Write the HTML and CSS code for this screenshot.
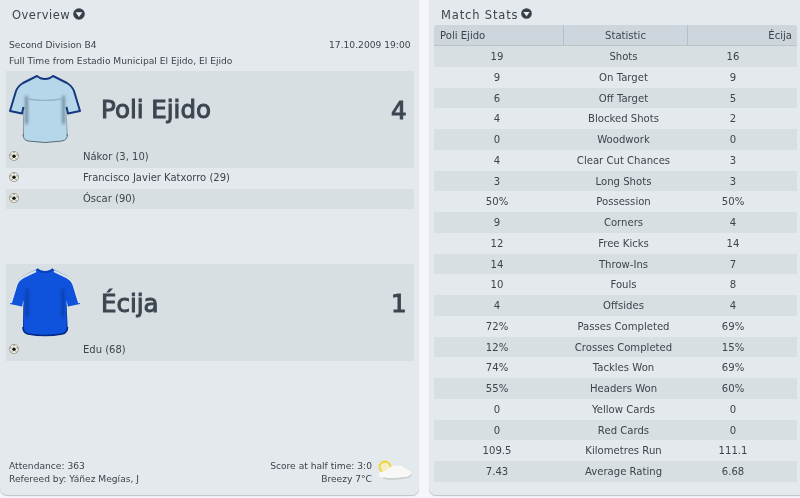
FILE: index.html
```html
<!DOCTYPE html>
<html lang="en">
<head>
<meta charset="utf-8">
<title>Match Overview</title>
<link rel="stylesheet" href="styles.css">
</head>
<body>
<svg class="defs" width="0" height="0" aria-hidden="true">
  <defs>
    <symbol id="ball" viewBox="0 0 10 10">
      <circle cx="5" cy="5" r="4.600" fill="#ecebdd" stroke="#7d7f72" stroke-width=".6"/>
      <circle cx="5" cy="5.300" r="1.700" fill="#141612"/>
      <path d="M1 4 2.600 3.800M9 4 7.400 3.800M5 .7V2M2.400 8.400 3.300 7.200M7.600 8.400 6.700 7.200" stroke="#66675f" stroke-width=".8"/>
    </symbol>
    <symbol id="chev" viewBox="0 0 12 12">
      <circle cx="6" cy="6" r="5.800" fill="#38414a"/>
      <path d="M2.600 4.300h6.800L6 8.900z" fill="#f0f3f5"/>
    </symbol>
    <clipPath id="shirt-clip">
      <path d="M28 2 31 4Q36 6 41 4L44 2 58 9Q63 12 65 17L71 37 59 39.500 57.500 33 58.500 60Q58.500 66 53 67 36 70 19 67 14 66 14 60L14.500 33 13 39.500 1 37 7 17Q9 12 14 9Z"/>
    </clipPath>
    <filter id="soft" x="-10%" y="-30%" width="120%" height="160%"><feGaussianBlur stdDeviation=".7"/></filter>
    <filter id="softer" x="-50%" y="-50%" width="200%" height="200%"><feGaussianBlur stdDeviation="1.800"/></filter>
    <filter id="tiny" x="-10%" y="-10%" width="120%" height="120%"><feGaussianBlur stdDeviation=".3"/></filter>
  </defs>
</svg>

<main class="layout">
  <section class="panel overview">
    <h2 class="title">Overview<svg class="chev"><use href="#chev"/></svg></h2>
    <div class="meta">
      <div class="meta-row"><span>Second Division B4</span><span>17.10.2009 19:00</span></div>
      <div class="meta-row"><span>Full Time from Estadio Municipal El Ejido, El Ejido</span></div>
    </div>

    <div class="team">
      <div class="team-head shaded">
        <svg class="shirt" viewBox="0 0 72 70">
          <path d="M28 2 31 4Q36 6 41 4L44 2 58 9Q63 12 65 17L71 37 59 39.500 57.500 33 58.500 60Q58.500 66 53 67 36 70 19 67 14 66 14 60L14.500 33 13 39.500 1 37 7 17Q9 12 14 9Z" fill="#b6d7ea"/>
          <g clip-path="url(#shirt-clip)">
            <path d="M17.500 22V50M54.500 22V50" stroke="#1f2f3a" stroke-width="2.600" stroke-opacity=".5" filter="url(#softer)"/>
            <path d="M14 38V62M58.500 38V62" stroke="#22313b" stroke-width="2" stroke-opacity=".4" filter="url(#soft)"/>
            <path d="M20 25Q36 28 52 25" stroke="#4d6576" stroke-width="1.500" fill="none" stroke-opacity=".3" filter="url(#soft)"/>
          </g>
          <path d="M14 60Q14 66 19 67 36 70 53 67 58.500 66 58.500 60" fill="none" stroke="#5a6b76" stroke-width="1" filter="url(#tiny)"/>
          <path d="M14.500 33 13 39.500 1 37 7 17Q9 12 14 9L28 2 31 4Q36 6 41 4L44 2 58 9Q63 12 65 17L71 37 59 39.500 57.500 33" fill="none" stroke="#15397f" stroke-width="2" stroke-linejoin="round" filter="url(#tiny)"/>
        </svg>
        <span class="team-name">Poli Ejido</span>
        <span class="score">4</span>
      </div>
      <div class="scorer shaded"><svg class="ball"><use href="#ball"/></svg><span>Nákor (3, 10)</span></div>
      <div class="scorer"><svg class="ball"><use href="#ball"/></svg><span>Francisco Javier Katxorro (29)</span></div>
      <div class="scorer shaded"><svg class="ball"><use href="#ball"/></svg><span>Óscar (90)</span></div>
    </div>

    <div class="team team-away">
      <div class="team-head shaded">
        <svg class="shirt" viewBox="0 0 72 70">
          <path d="M28 2 31 4Q36 6 41 4L44 2 58 9Q63 12 65 17L71 37 59 39.500 57.500 33 58.500 60Q58.500 66 53 67 36 70 19 67 14 66 14 60L14.500 33 13 39.500 1 37 7 17Q9 12 14 9Z" fill="#0f52dc"/>
          <g clip-path="url(#shirt-clip)">
            <path d="M18 22V50M54 22V50" stroke="#03205f" stroke-width="3" stroke-opacity=".4" filter="url(#softer)"/>
            <path d="M14 38V62M58.500 38V62" stroke="#03205f" stroke-width="2" stroke-opacity=".5" filter="url(#soft)"/>
          </g>
          <path d="M14 60Q14 66 19 67 36 70 53 67 58.500 66 58.500 60" fill="none" stroke="#052a85" stroke-width="1.600" filter="url(#tiny)"/>
          <path d="M1.800 36 7.500 17.500Q9 13 14.500 10L27 4M70.200 36 64.500 17.500Q63 13 57.500 10L45 4" fill="none" stroke="#dfe4e9" stroke-width="2.200" filter="url(#tiny)"/>
          <path d="M28 2 31 4Q36 6 41 4L44 2" fill="none" stroke="#0a3fb8" stroke-width="2"/>
        </svg>
        <span class="team-name">Écija</span>
        <span class="score">1</span>
      </div>
      <div class="scorer shaded"><svg class="ball"><use href="#ball"/></svg><span>Edu (68)</span></div>
    </div>

    <footer class="foot">
      <div class="foot-left">
        <div>Attendance: 363</div>
        <div>Refereed by: Yáñez Megías, J</div>
      </div>
      <div class="foot-right">
        <div>Score at half time: 3:0</div>
        <div>Breezy 7°C</div>
      </div>
      <svg class="weather" viewBox="0 0 36 24">
        <circle cx="9" cy="7" r="5.500" fill="#f3eec8" stroke="#f4d22e" stroke-width="1.800" filter="url(#tiny)"/>
        <path d="M7 18Q2 17 3 13.500 5 10.500 10 11 13 6 20 5.500 27 5 30 9 36 11 35.500 14.500 34 18 26 18Z" fill="#f8f9f7" filter="url(#tiny)"/>
        <path d="M7 18Q16 20 26 18 34 18 35.500 14.500" fill="none" stroke="#c6ccc8" stroke-width="1.400" filter="url(#soft)"/>
      </svg>
    </footer>
  </section>

  <section class="panel stats">
    <h2 class="title stats-title">Match Stats<svg class="chev chev-small"><use href="#chev"/></svg></h2>
    <div class="table">
      <div class="thead">
        <div class="th left">Poli Ejido</div>
        <div class="th mid">Statistic</div>
        <div class="th right">Écija</div>
      </div>
      <div class="row"><span>19</span><span>Shots</span><span>16</span></div>
      <div class="row"><span>9</span><span>On Target</span><span>9</span></div>
      <div class="row"><span>6</span><span>Off Target</span><span>5</span></div>
      <div class="row"><span>4</span><span>Blocked Shots</span><span>2</span></div>
      <div class="row"><span>0</span><span>Woodwork</span><span>0</span></div>
      <div class="row"><span>4</span><span>Clear Cut Chances</span><span>3</span></div>
      <div class="row"><span>3</span><span>Long Shots</span><span>3</span></div>
      <div class="row"><span>50%</span><span>Possession</span><span>50%</span></div>
      <div class="row"><span>9</span><span>Corners</span><span>4</span></div>
      <div class="row"><span>12</span><span>Free Kicks</span><span>14</span></div>
      <div class="row"><span>14</span><span>Throw-Ins</span><span>7</span></div>
      <div class="row"><span>10</span><span>Fouls</span><span>8</span></div>
      <div class="row"><span>4</span><span>Offsides</span><span>4</span></div>
      <div class="row"><span>72%</span><span>Passes Completed</span><span>69%</span></div>
      <div class="row"><span>12%</span><span>Crosses Completed</span><span>15%</span></div>
      <div class="row"><span>74%</span><span>Tackles Won</span><span>69%</span></div>
      <div class="row"><span>55%</span><span>Headers Won</span><span>60%</span></div>
      <div class="row"><span>0</span><span>Yellow Cards</span><span>0</span></div>
      <div class="row"><span>0</span><span>Red Cards</span><span>0</span></div>
      <div class="row"><span>109.5</span><span>Kilometres Run</span><span>111.1</span></div>
      <div class="row"><span>7.43</span><span>Average Rating</span><span>6.68</span></div>
    </div>
  </section>
</main>
</body>
</html>
```
FILE: styles.css
```css
* { box-sizing: border-box; }
html, body { margin: 0; height: 100%; }
body {
  width: 800px;
  height: 498px;
  overflow: hidden;
  background: #f4f6f9;
  color: #3d444b;
  font-family: "DejaVu Sans", Verdana, sans-serif;
  font-size: 9.150px;
}
.defs { position: absolute; }
.layout {
  display: grid;
  grid-template-columns: 419px 371px;
  column-gap: 10px;
  height: 495px;
  filter: blur(.35px);
}
.panel {
  background: #e4e9ee;
  border-radius: 0 0 7px 7px;
  box-shadow: 0 1px 1px #bcc2c8;
  display: flex;
  flex-direction: column;
}
.overview { padding: 0 5.500px 0 6px; }
.stats { padding-left: 5px; border-radius: 0 0 0 7px; }

.title {
  margin: 0;
  height: 25px;
  display: flex;
  align-items: center;
  padding: 5px 0 0 6px;
  font-size: 11.500px;
  font-weight: 400;
  letter-spacing: .5px;
  color: #3c444c;
}
.stats-title { padding-left: 7px; letter-spacing: .85px; }
.chev { width: 12px; height: 12px; margin: -3px 0 0 3px; }
.chev-small { width: 11px; height: 11px; margin-left: 3px; }

.meta { margin-top: 12px; }
.meta-row {
  display: flex;
  justify-content: space-between;
  height: 16px;
  line-height: 16px;
  padding: 0 3px;
}

.team { margin-top: 2px; }
.team-away { margin-top: 55px; }
.shaded { background: #d8dfe3; }
.team-head {
  display: flex;
  align-items: center;
  height: 76px;
  padding: 0 7px 0 3px;
}
.shirt { width: 72px; height: 70px; flex: none; align-self: flex-start; margin-top: 3px; }
.team-name {
  margin-left: 20px;
  padding-top: 3px;
  font-size: 24.500px;
  -webkit-text-stroke: 1px #3c4650;
  color: #3c4650;
  line-height: 1;
}
.score {
  margin-left: auto;
  padding-top: 3px;
  font-size: 24.500px;
  -webkit-text-stroke: 1px #3c4650;
  color: #3c4650;
}
.scorer {
  display: flex;
  height: 20.800px;
  line-height: 20px;
  padding-left: 3px;
  font-size: 10px;
}
.ball { width: 10px; height: 10px; margin-top: 4px; flex: none; }
.scorer span { margin-left: 64px; }

.foot {
  margin-top: auto;
  display: flex;
  padding: 0 0 9px 3px;
  line-height: 13px;
}
.foot-left { flex: 1; }
.foot-right { text-align: right; }
.weather { width: 36px; height: 24px; margin: 0 1.500px 0 4px; flex: none; }

.table { margin-right: 3px; }
.thead {
  display: grid;
  grid-template-columns: 129px 124px 1fr;
  height: 21px;
  background: #ccd6dc;
  border-radius: 3px 3px 0 0;
  border-bottom: 1px solid #b9c4cb;
}
.th { line-height: 21px; font-size: 10.100px; }
.th + .th { border-left: 1px solid #b4c0c8; }
.left { padding-left: 6px; }
.mid { text-align: center; }
.right { text-align: right; padding-right: 5px; }
.row {
  display: grid;
  grid-template-columns: 126px 127px 92px 18px;
  height: 20.750px;
  line-height: 22px;
  text-align: center;
  font-size: 10.100px;
}
.row:nth-child(even) { background: #d8dfe3; }
```
